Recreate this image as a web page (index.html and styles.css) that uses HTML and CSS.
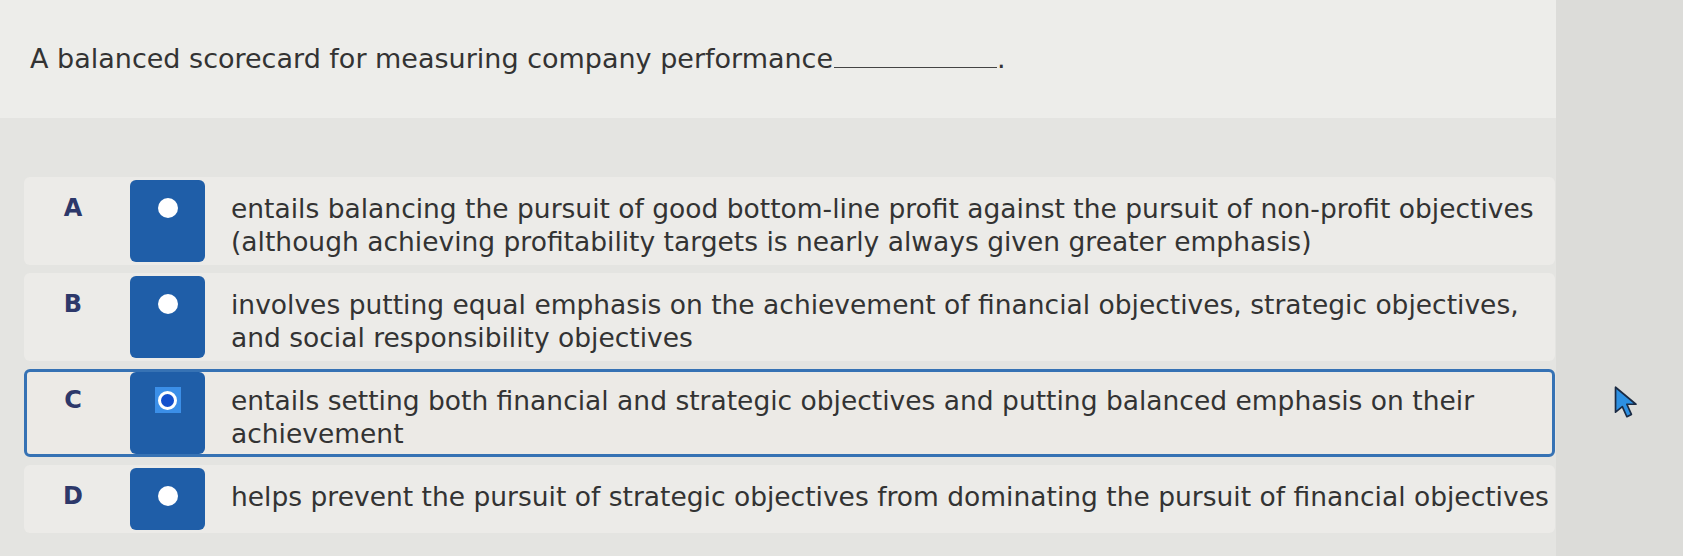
FILE: index.html
```html
<!DOCTYPE html>
<html>

<head>
    <meta charset='utf-8'>
    <title>Question</title>
    <meta name='viewport' content='width=device-width, initial-scale=1'>
    <link rel="stylesheet" href="styles.css">
</head>

<body>
    <div class="page">
        <div class="question">A balanced scorecard for measuring company performance<span class="blank"></span>.</div>
        <div class="band"></div>
        <div class="options">
            <div class="option">
                <div class="label">A</div>
                <div class="radio"><span class="dot"></span></div>
                <div class="text">entails balancing the pursuit of good bottom-line profit against the pursuit of non-profit objectives<br>(although achieving profitability targets is nearly always given greater emphasis)</div>
            </div>
            <div class="option">
                <div class="label">B</div>
                <div class="radio"><span class="dot"></span></div>
                <div class="text">involves putting equal emphasis on the achievement of financial objectives, strategic objectives,<br>and social responsibility objectives</div>
            </div>
            <div class="option selected">
                <div class="label">C</div>
                <div class="radio"><span class="focus"><span class="dot"></span></span></div>
                <div class="text">entails setting both financial and strategic objectives and putting balanced emphasis on their<br>achievement</div>
                <svg class="cursor" width="30" height="34" viewBox="0 0 26 30">
                    <path d="M2 2 L2 24 L8 19 L12 28 L16 26 L12 17 L20 17 Z" fill="#2d90e2" stroke="#1b2b44" stroke-width="1.5" stroke-linejoin="round"/>
                </svg>
            </div>
            <div class="option">
                <div class="label">D</div>
                <div class="radio"><span class="dot"></span></div>
                <div class="text">helps prevent the pursuit of strategic objectives from dominating the pursuit of financial objectives</div>
            </div>
        </div>
    </div>
</body>

</html>
```

FILE: styles.css
```css
body {
    background: #dcdcd9;
    margin: 0;
    font-family: "DejaVu Sans", Verdana, sans-serif;
    color: #333;
}

.page {
    width: 1556px;
    height: 556px;
    background: #e4e4e1;
}

.question {
    background: #ededea;
    height: 118px;
    box-sizing: border-box;
    padding: 39px 0 0 30px;
    font-size: 27px;
    line-height: 40px;
}

.blank {
    display: inline-block;
    width: 163px;
    border-bottom: 1px solid #444;
    margin-left: 1px;
    vertical-align: baseline;
}

.band {
    height: 59px;
}

.options {
    display: flex;
    flex-direction: column;
    gap: 8px;
    margin-left: 24px;
    width: 1531px;
}

.option {
    display: flex;
    position: relative;
    box-sizing: border-box;
    background: #ecebe8;
    border: 3px solid transparent;
    border-radius: 6px;
    min-height: 68px;
}

.option.selected {
    border-color: #3672b4;
    background: #eceae6;
}

.label {
    width: 103px;
    flex: none;
    box-sizing: border-box;
    padding: 14px 11px 0 0;
    text-align: center;
    font-weight: bold;
    font-size: 24px;
    color: #2d386a;
}

.radio {
    width: 75px;
    flex: none;
    background: #1f5ea8;
    border-radius: 6px;
    display: flex;
    justify-content: center;
    align-items: flex-start;
    padding-top: 18px;
    box-sizing: border-box;
}

.dot {
    width: 20px;
    height: 20px;
    border-radius: 50%;
    background: #fff;
    display: block;
}

.focus {
    width: 26px;
    height: 26px;
    background: #3b8fe8;
    display: flex;
    align-items: center;
    justify-content: center;
    margin-top: -3px;
}

.focus .dot {
    width: 13px;
    height: 13px;
    border: 3px solid #fff;
    background: #1450cc;
}

.text {
    padding: 12px 0 4px 26px;
    font-size: 26.5px;
    line-height: 33px;
}

.cursor {
    position: absolute;
    left: 1586px;
    top: 13px;
}
```
